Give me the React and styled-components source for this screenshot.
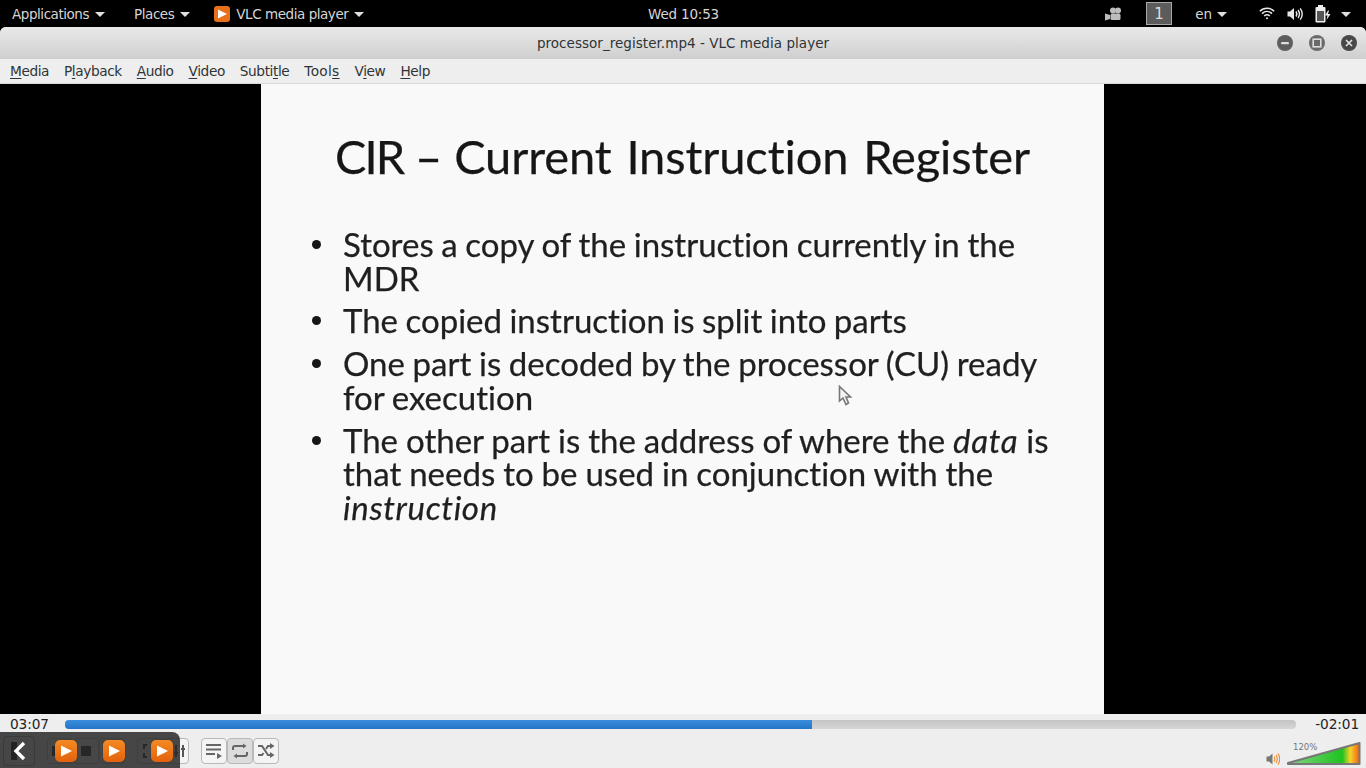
import React from "react";
import styled, { createGlobalStyle } from "styled-components";

const Global = createGlobalStyle`
  html, body { margin: 0; padding: 0; background: #000; overflow: hidden; }
  * { box-sizing: border-box; }
`;

const UI = `"DejaVu Sans", sans-serif`;

const Desktop = styled.div`
  position: relative;
  width: 1366px;
  height: 768px;
  display: flex;
  flex-direction: column;
  font-family: ${UI};
  background: #000;
`;

const TopBar = styled.header`
  height: 27px;
  flex: none;
  background: #000;
  color: #d6d6d6;
  display: grid;
  grid-template-columns: 1fr auto 1fr;
  align-items: center;
  font-size: 13.5px;
`;
const TopLeft = styled.div`
  display: flex;
  align-items: center;
  padding-left: 12px;
  letter-spacing: -0.45px;
`;
const TopRight = styled.div`
  display: flex;
  align-items: center;
  justify-content: flex-end;
  padding-right: 15px;
`;
const TopItem = styled.div`
  display: flex;
  align-items: center;
  gap: ${(p) => p.$gap ?? 6}px;
  margin-left: ${(p) => p.$ml ?? 0}px;
  white-space: nowrap;
`;
const Clock = styled.div`
  color: #d6d6d6;
  text-align: center;
  letter-spacing: -0.2px;
  margin-left: 1px;
`;
const Caret = styled.span`
  width: 0;
  height: 0;
  border-left: 5px solid transparent;
  border-right: 5px solid transparent;
  border-top: 5px solid #e0e0e0;
  margin-top: 1px;
`;
const Workspace = styled.div`
  width: 26px;
  height: 23px;
  border: 1px solid #a8a8a8;
  background: #5c5c5c;
  color: #ddd;
  font-size: 15px;
  display: flex;
  align-items: center;
  justify-content: center;
`;
const Window = styled.div`
  flex: 1;
  min-height: 0;
  display: flex;
  flex-direction: column;
  background: #eeeeee;
  border-radius: 6px 6px 0 0;
`;
const TitleBar = styled.div`
  height: 32px;
  flex: none;
  display: grid;
  grid-template-columns: 1fr auto 1fr;
  align-items: center;
  background: linear-gradient(#e9e9e9, #cfcfcf);
  border-radius: 6px 6px 0 0;
  color: #2e3436;
  font-size: 13.5px;
`;
const WinButtons = styled.div`
  grid-column: 3;
  display: flex;
  justify-content: flex-end;
  gap: 16px;
  padding-right: 9px;
`;
const WinButton = styled.span`
  width: 16px;
  height: 16px;
  border-radius: 50%;
  background: ${(p) => p.$bg};
  display: flex;
  align-items: center;
  justify-content: center;
`;
const Title = styled.div`
  grid-column: 2;
  white-space: nowrap;
  letter-spacing: 0.04px;
`;
const MenuBar = styled.nav`
  height: 25px;
  flex: none;
  display: flex;
  align-items: center;
  gap: 15px;
  padding-left: 10px;
  background: #eeeeee;
  border-bottom: 1px solid #d8d8d8;
  color: #2e3436;
  font-size: 13.7px;
  letter-spacing: -0.42px;
`;
const MenuItem = styled.span`
  letter-spacing: ${(p) => p.$spacing ?? "inherit"};
  u { text-decoration: underline; text-underline-offset: 2px; }
`;
const Video = styled.main`
  height: 630px;
  flex: none;
  background: #000;
  padding-left: 261px;
`;
const Slide = styled.section`
  position: relative;
  width: 843px;
  height: 100%;
  background: #f9f9f9;
  padding-top: 43px;
  font-family: "Lato", "Carlito", sans-serif;
  font-variant-ligatures: none;
  color: #1f1f1f;
  -webkit-text-stroke: 0.25px currentColor;
  filter: blur(0.35px);
`;
const SlideTitle = styled.h1`
  margin: 0;
  font-weight: 400;
  font-size: 47px;
  line-height: 58px;
  color: #161616;
  text-align: center;
  white-space: nowrap;
  letter-spacing: -0.1px;
  word-spacing: 3px;
`;
const TitleLead = styled.span`
  word-spacing: 0;
`;
const TitleAbbr = styled.span`
  letter-spacing: -2px;
`;
const Bullets = styled.ul`
  list-style: none;
  margin: 43px 0 0;
  padding: 0 0 0 82px;
  display: flex;
  flex-direction: column;
  gap: 9px;
  font-size: 33px;
  line-height: 33.7px;
  word-spacing: -0.8px;
  white-space: nowrap;
  em { letter-spacing: 0.65px; }
`;
const Bullet = styled.li`
  position: relative;
  word-spacing: ${(p) => p.$wordSpacing ?? "inherit"};
  &::before {
    content: "";
    position: absolute;
    left: -31px;
    top: 12px;
    width: 9px;
    height: 9px;
    border-radius: 50%;
    background: #161616;
  }
`;
const Pointer = styled.svg`
  position: absolute;
  left: 577px;
  top: 301px;
`;
const ProgressRow = styled.div`
  height: 24px;
  flex: none;
  display: flex;
  align-items: center;
  padding: 0 7px 4px 10px;
  color: #222;
  font-size: 13.7px;
  letter-spacing: -0.1px;
  background: #eeeeee;
`;
const Track = styled.div`
  flex: 1;
  height: 9px;
  margin: 0 19px 0 16px;
  border-radius: 4px;
  overflow: hidden;
  background: linear-gradient(#c4c4c4, #d6d6d6);
`;
const Fill = styled.div`
  height: 100%;
  background: linear-gradient(#3b8ddd, #2475c8);
`;
const Controls = styled.div`
  position: relative;
  height: 30px;
  flex: none;
  display: flex;
  align-items: flex-start;
  gap: 12px;
  padding-left: 47px;
  background: #eeeeee;
`;
const Group = styled.div`
  display: flex;
`;
const CtlButton = styled.button`
  width: 26px;
  height: 26px;
  padding: 0;
  margin: 0;
  display: flex;
  align-items: center;
  justify-content: ${(p) => p.$justify ?? "center"};
  border: 1px solid #b8b8b8;
  border-radius: 4px;
  background: ${(p) => (p.$active ? "#dcdcdc" : "#f4f4f4")};
  color: #555;
`;
const Volume = styled.div`
  position: relative;
  margin-left: auto;
  margin-right: 5px;
  height: 30px;
  width: 95px;
  display: flex;
  align-items: flex-end;
  gap: 7px;
`;
const Percent = styled.span`
  position: absolute;
  left: 27px;
  top: 4px;
  font-size: 8.5px;
  color: #777;
`;
const Overlay = styled.div`
  position: absolute;
  left: 0;
  bottom: 0;
  width: 180px;
  height: 36px;
  background: rgba(40, 40, 40, 0.85);
  border-top-right-radius: 8px;
`;
const BackButton = styled.div`
  position: absolute;
  left: 3px;
  top: 4px;
  width: 32px;
  height: 30px;
  border: 1px solid #3a3a3a;
  border-radius: 4px;
  display: flex;
  align-items: center;
  justify-content: center;
`;
const OrangeButton = styled.div`
  position: absolute;
  left: ${(p) => p.$x}px;
  top: 8px;
  width: 22px;
  height: 22px;
  border-radius: 5px;
  background: linear-gradient(#f58a22, #e2620e);
  display: flex;
  align-items: center;
  justify-content: center;
  box-shadow: 0 0 1px rgba(0, 0, 0, 0.6);
`;

const PlayGlyph = ({ size = 14 }) => (
  <svg width={size} height={size} viewBox="0 0 14 14">
    <path d="M2 1.5 L13 7 L2 12.5 Z" fill="#fff" />
  </svg>
);

const Under = ({ children }) => <u>{children}</u>;

const lines = [
  { body: <>Stores a copy of the instruction currently in the<br />MDR</> },
  { body: <>The copied instruction is split into parts</>, spacing: "-1px" },
  { body: <>One part is decoded by the processor (CU) ready<br />for execution</> },
  { body: <>The other part is the address of where the <em>data</em> is<br />that needs to be used in conjunction with the<br /><em>instruction</em></>, spacing: "-0.5px" },
];

export default function App() {
  return (
    <Desktop>
      <Global />
      <TopBar>
        <TopLeft>
          <TopItem>Applications <Caret /></TopItem>
          <TopItem $ml={29}>Places <Caret /></TopItem>
          <TopItem $ml={24} $gap={6}>
            <svg width="16" height="16" viewBox="0 0 16 16">
              <rect width="16" height="16" rx="3" fill="#e8701a" />
              <path d="M4 3.5 L13 8 L4 12.5 Z" fill="#fff" />
            </svg>
            VLC media player <Caret />
          </TopItem>
        </TopLeft>
        <Clock>Wed 10:53</Clock>
        <TopRight>
          <TopItem>
            <svg width="16" height="14" viewBox="0 0 16 14" fill="#bdbdbd">
              <circle cx="8" cy="3.5" r="3" />
              <circle cx="13" cy="3.5" r="3" />
              <rect x="5.5" y="6.5" width="10" height="6.5" rx="1.5" />
              <path d="M0 6.5 L5 8 V12 L0 13.5 Z" />
            </svg>
          </TopItem>
          <TopItem $ml={25}><Workspace>1</Workspace></TopItem>
          <TopItem $ml={23} $gap={5}>en <Caret /></TopItem>
          <TopItem $ml={32}>
            <svg width="16" height="13" viewBox="0 0 16 13" fill="none" stroke="#e8e8e8" strokeWidth="1.5">
              <path d="M0.8 4.2 C4.8 0.3 11.2 0.3 15.2 4.2" />
              <path d="M3 6.6 C6 3.8 10 3.8 13 6.6" />
              <path d="M5.2 9 C7 7.4 9 7.4 10.8 9" />
              <circle cx="8" cy="11.2" r="1" fill="#e8e8e8" stroke="none" />
            </svg>
          </TopItem>
          <TopItem $ml={12}>
            <svg width="16" height="14" viewBox="0 0 16 14" fill="none" stroke="#e8e8e8" strokeWidth="1.4">
              <path d="M0.5 4.5 H3 L7 1 V13 L3 9.5 H0.5 Z" fill="#e8e8e8" stroke="none" />
              <path d="M9 4.5 C10 6 10 8 9 9.5" />
              <path d="M11 3 C12.8 5.5 12.8 8.5 11 11" />
              <path d="M13.2 1.4 C15.8 5 15.8 9 13.2 12.6" />
            </svg>
          </TopItem>
          <TopItem $ml={12}>
            <svg width="16" height="18" viewBox="0 0 16 18">
              <rect x="3" y="0" width="5" height="2" fill="#eee" />
              <rect x="0.5" y="2" width="10" height="15.5" rx="1" fill="#eee" />
              <rect x="2" y="6" width="7" height="10" fill="#555" />
              <path d="M13 5.5 L10 10.5 H12.5 L11.5 15 L15.5 9 H13 L14 5.5 Z" fill="#eee" />
            </svg>
          </TopItem>
          <TopItem $ml={10}><Caret /></TopItem>
        </TopRight>
      </TopBar>
      <Window>
        <TitleBar>
          <Title>processor_register.mp4 - VLC media player</Title>
          <WinButtons>
            <WinButton $bg="#5e5e5e">
              <svg width="10" height="10" viewBox="0 0 10 10"><rect x="1" y="4" width="8" height="2.2" rx="1" fill="#ddd" /></svg>
            </WinButton>
            <WinButton $bg="#6a6a6a">
              <svg width="10" height="10" viewBox="0 0 10 10"><rect x="1.2" y="1.2" width="7.6" height="7.6" fill="none" stroke="#ddd" strokeWidth="1.6" /></svg>
            </WinButton>
            <WinButton $bg="#484848">
              <svg width="10" height="10" viewBox="0 0 10 10"><path d="M2 2 L8 8 M8 2 L2 8" stroke="#e4e4e4" strokeWidth="1.6" /></svg>
            </WinButton>
          </WinButtons>
        </TitleBar>
        <MenuBar>
          <MenuItem><Under>M</Under>edia</MenuItem>
          <MenuItem>P<Under>l</Under>ayback</MenuItem>
          <MenuItem><Under>A</Under>udio</MenuItem>
          <MenuItem><Under>V</Under>ideo</MenuItem>
          <MenuItem>Subti<Under>t</Under>le</MenuItem>
          <MenuItem $spacing="0.3px">Tool<Under>s</Under></MenuItem>
          <MenuItem>V<Under>i</Under>ew</MenuItem>
          <MenuItem><Under>H</Under>elp</MenuItem>
        </MenuBar>
        <Video>
          <Slide>
            <SlideTitle>
              <TitleLead><TitleAbbr>CIR</TitleAbbr> – </TitleLead>
              Current Instruction Register
            </SlideTitle>
            <Bullets>
              {lines.map((l, i) => <Bullet key={i} $wordSpacing={l.spacing}>{l.body}</Bullet>)}
            </Bullets>
            <Pointer width="14" height="21" viewBox="0 0 14 21">
              <path d="M1.5 1.5 V16 L5 13 L8 19.5 L10.5 18 L8 12 L12.5 12 Z" fill="#f4f4f4" stroke="#777" strokeWidth="1.6" />
            </Pointer>
          </Slide>
        </Video>
        <ProgressRow>
          03:07
          <Track><Fill style={{ width: `${(747 / 1231) * 100}%` }} /></Track>
          -02:01
        </ProgressRow>
        <Controls>
          <Group>
            <CtlButton $justify="flex-start">
              <svg width="20" height="12" viewBox="0 0 20 12" fill="#222">
                <rect x="4" y="1" width="4" height="10" />
                <path d="M18 1 V11 L9 6 Z" />
              </svg>
            </CtlButton>
            <CtlButton>
              <svg width="12" height="12" viewBox="0 0 12 12"><rect x="1" y="1" width="10" height="10" fill="#222" /></svg>
            </CtlButton>
            <CtlButton />
          </Group>
          <Group>
            <CtlButton>
              <svg width="14" height="14" viewBox="0 0 14 14" fill="none" stroke="#222" strokeWidth="2">
                <path d="M1 5 V1 H4 M1 9 V13 H4" />
              </svg>
            </CtlButton>
            <CtlButton>
              <svg width="20" height="14" viewBox="0 0 20 14" fill="none" stroke="#555" strokeWidth="2">
                <path d="M10 1 V13 M8 9 H12 M17 1 V13 M15 5 H19" />
              </svg>
            </CtlButton>
          </Group>
          <Group>
            <CtlButton>
              <svg width="18" height="16" viewBox="0 0 18 16" fill="#666">
                <rect x="1" y="1" width="15" height="2" />
                <rect x="1" y="5.5" width="15" height="2" />
                <rect x="1" y="10" width="9" height="2" />
                <path d="M12 10 L17 13 L12 16 Z" />
              </svg>
            </CtlButton>
            <CtlButton $active>
              <svg width="18" height="16" viewBox="0 0 18 16" fill="none" stroke="#666" strokeWidth="2">
                <path d="M2 7 V5 C2 4 3 3 4 3 H13" />
                <path d="M16 9 V11 C16 12 15 13 14 13 H5" />
                <path d="M12 0.5 L15.5 3 L12 5.5 Z" fill="#666" stroke="none" />
                <path d="M6 10.5 L2.5 13 L6 15.5 Z" fill="#666" stroke="none" />
              </svg>
            </CtlButton>
            <CtlButton>
              <svg width="18" height="16" viewBox="0 0 18 16" fill="none" stroke="#666" strokeWidth="2">
                <path d="M1 3 H5 L11 12 H14" />
                <path d="M1 12 H5 L6.5 10 M9 6 L11 3 H14" />
                <path d="M13 0 L17.5 3 L13 6 Z M13 9 L17.5 12 L13 15 Z" fill="#666" stroke="none" />
              </svg>
            </CtlButton>
          </Group>
          <Volume>
            <svg width="14" height="14" viewBox="0 0 14 14" fill="none" style={{ marginBottom: 2 }}>
              <path d="M0.5 4.5 H3 L6.5 1.5 V12.5 L3 9.5 H0.5 Z" fill="#777" />
              <path d="M8 4.5 C9 6 9 8 8 9.5 M10 3 C11.6 5.5 11.6 8.5 10 11 M12 1.5 C14.2 5 14.2 9 12 12.5" stroke="#ef8a2a" strokeWidth="1.1" />
            </svg>
            <svg width="74" height="23" viewBox="0 0 74 23" style={{ marginBottom: 3 }}>
              <defs>
                <linearGradient id="vol" x1="0" x2="1" y1="0" y2="0">
                  <stop offset="0" stopColor="#86d486" />
                  <stop offset="0.76" stopColor="#1fc21f" />
                  <stop offset="0.87" stopColor="#f6d32a" />
                  <stop offset="1" stopColor="#f2600f" />
                </linearGradient>
              </defs>
              <path d="M1 21 L72.5 1 V22 H1 Z" fill="url(#vol)" stroke="#777" strokeWidth="2" strokeLinejoin="round" />
            </svg>
            <Percent>120%</Percent>
          </Volume>
        </Controls>
      </Window>
      <Overlay>
        <BackButton>
          <svg width="16" height="22" viewBox="0 0 16 22" fill="none">
            <rect x="0" y="2" width="6" height="18" fill="#222" />
            <path d="M13 3 L5 11 L13 19" stroke="#fff" strokeWidth="3.4" />
          </svg>
        </BackButton>
        <OrangeButton $x={55}><PlayGlyph /></OrangeButton>
        <OrangeButton $x={103}><PlayGlyph /></OrangeButton>
        <OrangeButton $x={151}><PlayGlyph /></OrangeButton>
      </Overlay>
    </Desktop>
  );
}
